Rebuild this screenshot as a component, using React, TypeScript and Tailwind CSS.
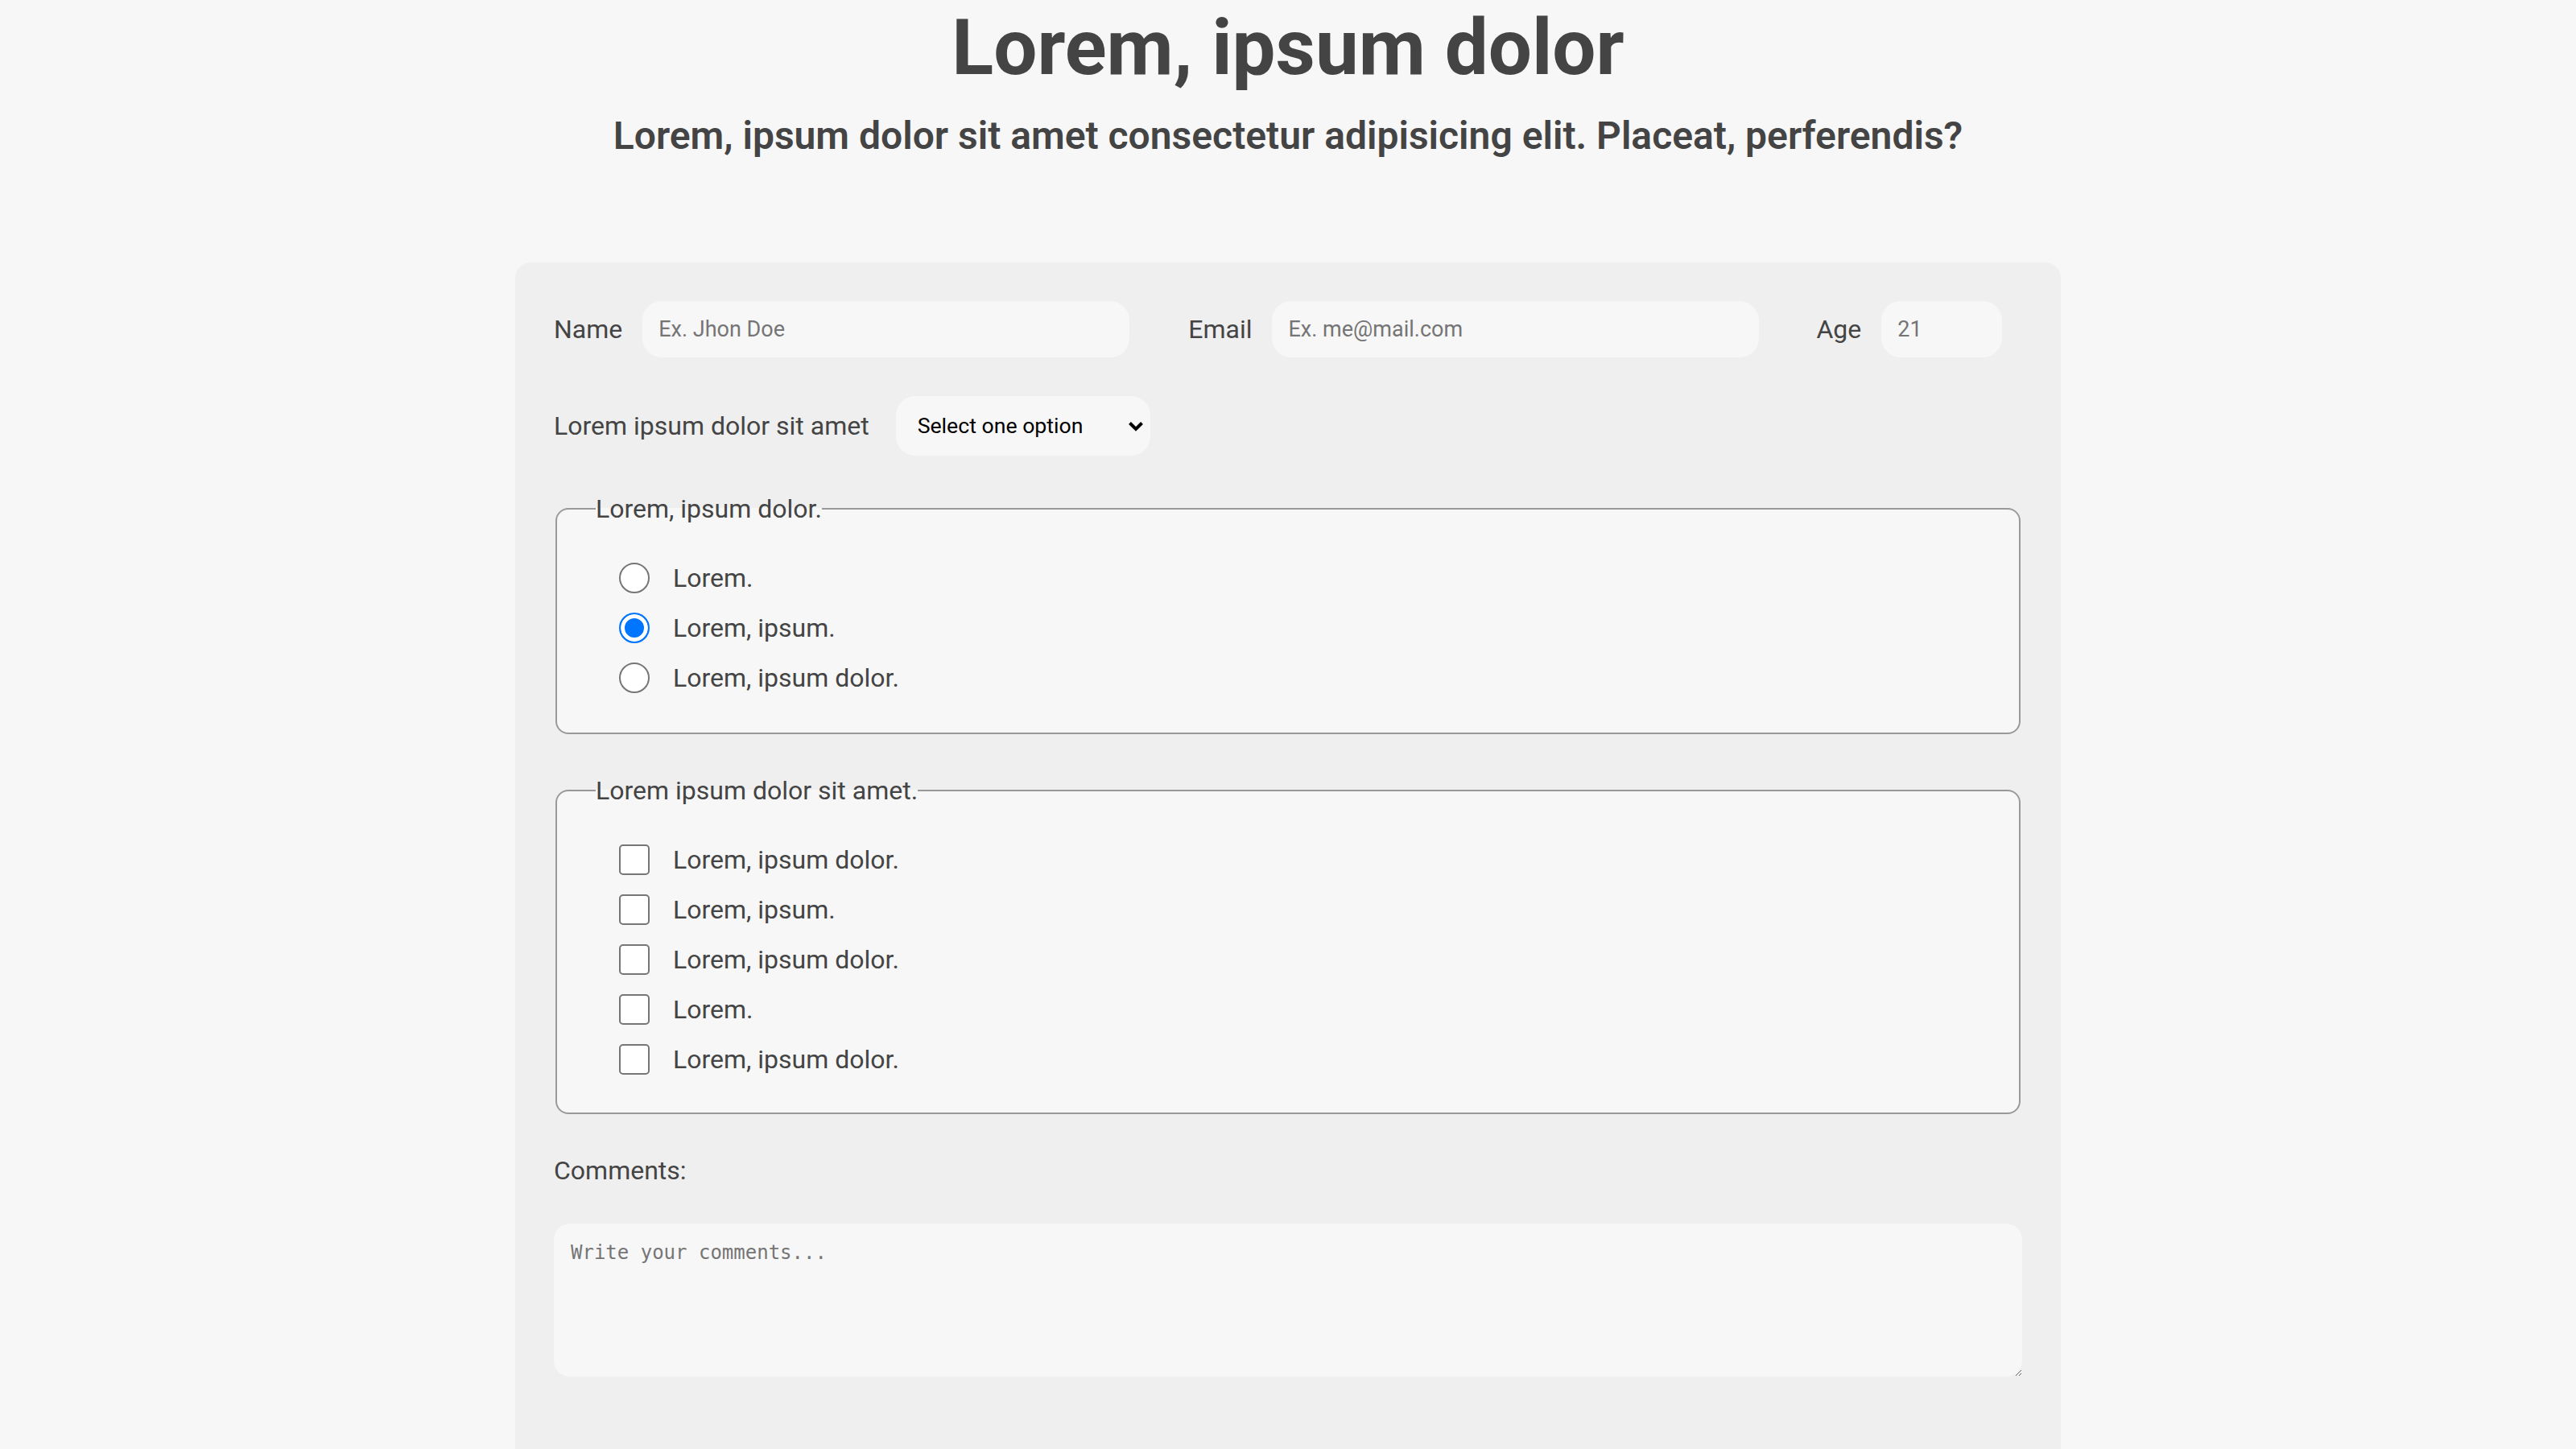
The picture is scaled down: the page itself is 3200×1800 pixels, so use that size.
import React from 'react';

const radios = ['Lorem.', 'Lorem, ipsum.', 'Lorem, ipsum dolor.'];
const checks = ['Lorem, ipsum dolor.', 'Lorem, ipsum.', 'Lorem, ipsum dolor.', 'Lorem.', 'Lorem, ipsum dolor.'];

function Field({ label, width, className = '', placeholder }: { label: string; width: string; className?: string; placeholder: string }) {
  return (
    <div className={`flex items-center ${className}`}>
      <label className="text-[32px] text-[#444]">{label}</label>
      <input
        placeholder={placeholder}
        className={`${width} ml-[25px] h-[70px] rounded-[24px] bg-[#f7f7f7] px-[20px] text-[27px] text-[#444] outline-none placeholder:text-[#757575]`}
      />
    </div>
  );
}

export default function App() {
  return (
    <div className="min-h-screen bg-[#f7f7f7] font-['Roboto',sans-serif] text-[#444]">
      {/* Header */}
      <h1 className="pt-[3px] text-center text-[96px] font-bold leading-[112px] text-[#444]">Lorem, ipsum dolor</h1>
      <h2 className="mt-[26px] text-center text-[48px] font-semibold leading-[56px] text-[#444]">
        Lorem, ipsum dolor sit amet consectetur adipisicing elit. Placeat, perferendis?
      </h2>

      {/* Form card */}
      <form className="mx-auto mt-[129px] w-[1920px] rounded-t-[20px] bg-[#efefef] px-[48px] pb-[200px] pt-[48px]">
        <div className="flex items-center">
          <Field label="Name" width="w-[605px]" placeholder="Ex. Jhon Doe" />
          <Field label="Email" width="w-[605px]" className="ml-[73px]" placeholder="Ex. me@mail.com" />
          <Field label="Age" width="w-[150px]" className="ml-[71px]" placeholder="21" />
        </div>

        <div className="mt-[48px] flex items-center">
          <label className="text-[32px] text-[#444]">Lorem ipsum dolor sit amet</label>
          <div className="relative ml-[33px]">
            <select className="block h-[74px] w-[316px] appearance-none rounded-[24px] bg-[#f7f7f7] pl-[27px] text-[26.67px] text-black outline-none">
              <option>Select one option</option>
            </select>
            <svg className="pointer-events-none absolute right-[8px] top-[31px] h-[13px] w-[20px]" viewBox="0 0 20 13" fill="none">
              <path d="M2.5 2.5 L10 10 L17.5 2.5" stroke="black" strokeWidth="4" />
            </svg>
          </div>
        </div>

        <fieldset className="mx-[2px] mt-[42px] rounded-[16px] border-2 border-[#999] bg-[#f7f7f7] px-[48px] pb-[37px] pt-[31px]">
          <legend className="text-[32px] text-[#444]">Lorem, ipsum dolor.</legend>
          <div className="pl-[29px]">
            {radios.map((r, i) => (
              <label key={i} className="flex h-[62px] items-center">
                <input
                  type="radio"
                  name="opt"
                  defaultChecked={i === 1}
                  className="m-0 h-[38px] w-[38px] shrink-0 appearance-none rounded-full border-2 border-[#767676] bg-white checked:border-[#0075ff] checked:bg-[#0075ff] checked:shadow-[inset_0_0_0_5px_white]"
                />
                <span className="ml-[29px] text-[32px] text-[#444]">{r}</span>
              </label>
            ))}
          </div>
        </fieldset>

        <fieldset className="mx-[2px] mt-[46px] rounded-[16px] border-2 border-[#999] bg-[#f7f7f7] px-[48px] pb-[35px] pt-[31px]">
          <legend className="text-[32px] text-[#444]">Lorem ipsum dolor sit amet.</legend>
          <div className="pl-[29px]">
            {checks.map((c, i) => (
              <label key={i} className="flex h-[62px] items-center">
                <input
                  type="checkbox"
                  className="m-0 h-[38px] w-[38px] shrink-0 appearance-none rounded-[5px] border-2 border-[#767676] bg-white"
                />
                <span className="ml-[29px] text-[32px] text-[#444]">{c}</span>
              </label>
            ))}
          </div>
        </fieldset>

        <p className="mt-[52px] text-[32px] leading-[37px] text-[#444]">Comments:</p>
        <textarea
          placeholder="Write your comments..."
          className="mt-[47px] block h-[190px] w-full rounded-[20px] bg-[#f7f7f7] px-[21px] py-[22px] font-['DejaVu_Sans_Mono',monospace] text-[24px] leading-[28px] text-[#444] outline-none placeholder:text-[#757575]"
        />
      </form>
    </div>
  );
}
